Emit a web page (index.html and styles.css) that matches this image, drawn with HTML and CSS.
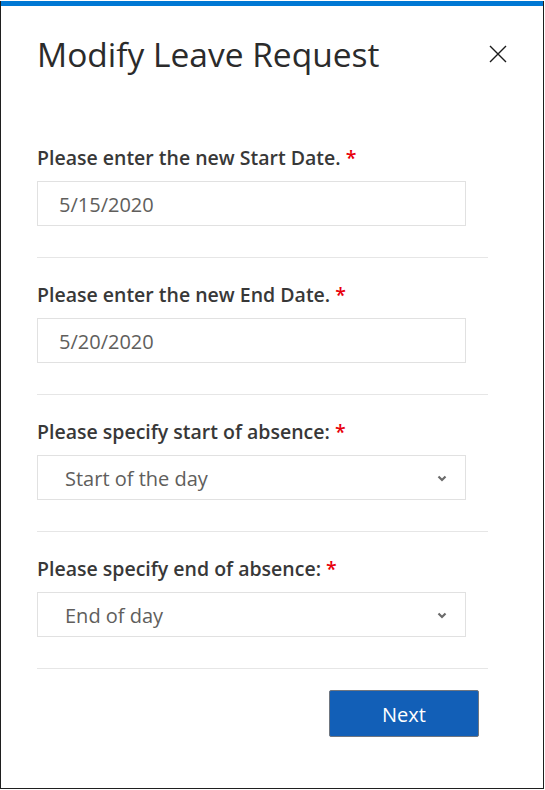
FILE: index.html
```html
<!DOCTYPE html>
<html lang="en">
<head>
<meta charset="utf-8">
<title>Modify Leave Request</title>
<link rel="stylesheet" href="styles.css">
</head>
<body>
<div class="dialog">
  <div class="topbar"></div>
  <div class="header">
    <h1 class="title">Modify Leave Request</h1>
    <svg class="close" width="18" height="18" viewBox="0 0 18 18" aria-label="Close">
      <path d="M1 1 L17 17 M17 1 L1 17" stroke="#1b1b1b" stroke-width="1.4" fill="none"/>
    </svg>
  </div>
  <div class="form">
    <div class="section">
      <div class="label">Please enter the new Start Date. <span class="req">*</span></div>
      <div class="field">5/15/2020</div>
    </div>
    <div class="section">
      <div class="label">Please enter the new End Date. <span class="req">*</span></div>
      <div class="field">5/20/2020</div>
    </div>
    <div class="section">
      <div class="label">Please specify start of absence: <span class="req">*</span></div>
      <div class="field select"><span>Start of the day</span>
        <svg class="chev" width="10" height="7" viewBox="0 0 10 7"><path d="M1.5 1.5 L5 5 L8.5 1.5" stroke="#6b6b6b" stroke-width="2.2" fill="none"/></svg>
      </div>
    </div>
    <div class="section">
      <div class="label">Please specify end of absence: <span class="req">*</span></div>
      <div class="field select"><span>End of day</span>
        <svg class="chev" width="10" height="7" viewBox="0 0 10 7"><path d="M1.5 1.5 L5 5 L8.5 1.5" stroke="#6b6b6b" stroke-width="2.2" fill="none"/></svg>
      </div>
    </div>
    <div class="actions">
      <button class="btn">Next</button>
    </div>
  </div>
</div>
</body>
</html>
```

FILE: styles.css
```css
html, body {
  margin: 0;
  padding: 0;
  background: #ffffff;
}
body {
  font-family: "Open Sans", "Noto Sans", sans-serif;
  color: #323130;
}
.dialog {
  box-sizing: border-box;
  margin-top: 1px;
  width: 544px;
  height: 788px;
  border: 1px solid #1f1f1f;
  border-top: none;
  background: #fff;
}
.topbar {
  height: 5px;
  background: #0078d4;
}
.header {
  display: flex;
  align-items: center;
  justify-content: space-between;
  margin-top: 28px;
  padding: 0 36px 0 36px;
  height: 40px;
}
.title {
  margin: 0;
  font-size: 33.5px;
  line-height: 40px;
  font-weight: 400;
  color: #2b2b2b;
  letter-spacing: 0;
}
.close {
  display: block;
}
.form {
  padding: 0 55px 0 36px;
  margin-top: 72px;
}
.section {
  padding: 0 0 31px 0;
  border-bottom: 1px solid #e6e6e6;
}
.section + .section {
  padding-top: 25px;
}
.label {
  font-size: 19.5px;
  line-height: 24px;
  font-weight: 600;
  color: #383838;
}
.req {
  color: #e8000b;
}
.field {
  box-sizing: border-box;
  margin-top: 11px;
  width: 429px;
  height: 45px;
  border: 1px solid #e1e1e1;
  padding-left: 21px;
  padding-top: 2px;
  display: flex;
  align-items: center;
  font-size: 20px;
  color: #605e5c;
}
.select {
  justify-content: space-between;
  padding-left: 27px;
  padding-right: 18px;
}
.chev {
  display: block;
}
.actions {
  display: flex;
  justify-content: flex-end;
  padding-top: 21px;
  padding-right: 9px;
}
.btn {
  box-sizing: border-box;
  width: 150px;
  height: 47px;
  background: #125fb7;
  border: 1px solid #6f7680;
  border-radius: 2px;
  color: #ffffff;
  font-family: "Open Sans", "Noto Sans", sans-serif;
  font-size: 20px;
  padding: 2px 0 0 0;
}
```
